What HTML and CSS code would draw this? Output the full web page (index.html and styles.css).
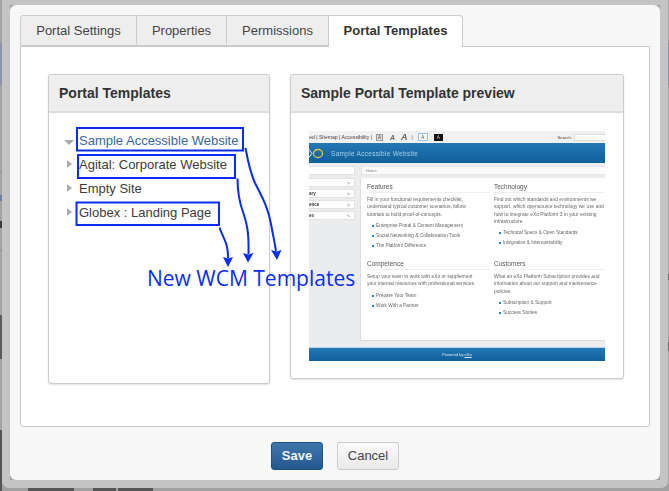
FILE: index.html
```html
<!DOCTYPE html>
<html lang="en">
<head>
<meta charset="utf-8">
<title>Portal Templates</title>
<link rel="stylesheet" href="styles.css">
</head>
<body>
<div class="edge-left"></div>
<div class="edge-right"></div>
<div class="edge-bottom"><i class="b1"></i><i class="b2"></i><i class="b3"></i></div>
<div class="frame">
  <div class="modal">
    <div class="tabs">
      <div class="tab t1">Portal Settings</div>
      <div class="tab t2">Properties</div>
      <div class="tab t3">Permissions</div>
      <div class="tab active">Portal Templates</div>
    </div>
    <div class="panel">
      <section class="card left">
        <h2 class="card-head">Portal Templates</h2>
        <ul class="tree">
          <li class="row sel"><span class="tri down"></span>Sample Accessible Website</li>
          <li class="row"><span class="tri"></span>Agital: Corporate Website</li>
          <li class="row"><span class="tri"></span>Empty Site</li>
          <li class="row"><span class="tri"></span>Globex : Landing Page</li>
        </ul>
      </section>
      <section class="card right">
        <h2 class="card-head">Sample Portal Template preview</h2>
        <div class="preview-wrap">
          <div class="preview">
            <div class="p-top">
              <span class="p-links">ed | Sitemap | Accessibility |</span>
              <span class="p-a box">A</span>
              <span class="p-a big1">A</span>
              <span class="p-a big2">A</span>
              <span class="p-sep">|</span>
              <span class="p-a wbox">A</span>
              <span class="p-a bbox">A</span>
              <span class="p-search">Search:</span>
              <span class="p-input"></span>
            </div>
            <div class="p-head">
              <svg class="p-logo" width="15" height="11" viewBox="0 0 15 11" aria-hidden="true">
                <path d="M0 1.500L3 5.500L0 9.500" fill="none" stroke="#dfe9ef" stroke-width="1"/>
                <ellipse cx="9" cy="5.500" rx="4.500" ry="4" fill="none" stroke="#e3c83a" stroke-width="1.300"/>
              </svg>
              <span class="p-title">Sample Accessible Website</span>
            </div>
            <div class="p-mid">
              <div class="p-side">
                <div class="p-item blank"></div>
                <div class="p-item"><b></b><span>&gt;</span></div>
                <div class="p-item"><b>ary</b><span>&gt;</span></div>
                <div class="p-item"><b>ence</b><span>&gt;</span></div>
                <div class="p-item"><b>es</b><span>&gt;</span></div>
              </div>
              <div class="p-content">
                <div class="p-crumb">Home</div>
                <div class="p-main">
                  <div class="p-col">
                    <h3>Features</h3>
                    <p>Fill in your functional requirements checklist, understand typical customer scenarios, follow tutorials to build proof-of-concepts.</p>
                    <ul><li>Enterprise Portal &amp; Content Management</li><li>Social Networking &amp; Collaboration Tools</li><li>The Platform Difference</li></ul>
                  </div>
                  <div class="p-col">
                    <h3>Technology</h3>
                    <p>Find out which standards and environments we support, which opensource technology we use and how to integrate eXo Platform 3 in your existing infrastructure.</p>
                    <ul><li>Technical Specs &amp; Open Standards</li><li>Integration &amp; Interoperability</li></ul>
                  </div>
                  <div class="p-col">
                    <h3>Competence</h3>
                    <p>Setup your team to work with eXo or supplement your internal resources with professional services.</p>
                    <ul><li>Prepare Your Team</li><li>Work With a Partner</li></ul>
                  </div>
                  <div class="p-col">
                    <h3>Customers</h3>
                    <p>What an eXo Platform Subscription provides and information about our support and maintenance policies.</p>
                    <ul><li>Subscription &amp; Support</li><li>Success Stories</li></ul>
                  </div>
                </div>
              </div>
            </div>
            <div class="p-foot">Powered by <u>eXo</u></div>
          </div>
        </div>
      </section>
    </div>
    <div class="actions">
      <button class="btn primary" type="button">Save</button>
      <button class="btn" type="button">Cancel</button>
    </div>
  </div>
</div>
<svg class="marks" width="669" height="491" viewBox="0 0 669 491" aria-hidden="true">
  <g fill="none" stroke="#0a2cf5" stroke-width="2">
    <rect x="77" y="128" width="166" height="22.5"/>
    <rect x="78" y="155" width="157" height="23"/>
    <rect x="76.5" y="202.5" width="142.5" height="22.5"/>
    <path d="M245.500 148C248 162 251 174 255 183C262 197 268 207 271 224C273 235 275 244 276 251"/>
    <path d="M237.500 178.500C237.500 193 239 201 243 212C247 224 249 232 248.500 254"/>
    <path d="M219.500 227.500C222 235 226 241 227 247C228 251 228 254 228 258"/>
  </g>
  <g fill="#0a2cf5">
    <path d="M271 250L276.500 251.500L281.500 250L277 260Z"/>
    <path d="M243 253L248.500 254.500L253.500 253L248 262.500Z"/>
    <path d="M223 257L228 258.500L233 257L228 267Z"/>
  </g>
</svg>
<div class="note">New WCM Templates</div>
</body>
</html>
```
FILE: styles.css
```css
* { box-sizing: border-box; }
html, body { margin: 0; padding: 0; }
body {
  width: 669px;
  height: 491px;
  overflow: hidden;
  position: relative;
  background: #a0a0a0;
  font-family: "Liberation Sans", Arial, sans-serif;
  color: #333;
}
.edge-left {
  position: absolute;
  left: 0;
  top: 0;
  width: 2px;
  height: 491px;
  background: linear-gradient(#a3a3a3 0 43px, #8a94aa 43px 85px, #a3a3a3 85px 171px, #8c8c8c 171px 172px, #a3a3a3 172px 195px, #6e7f9f 195px 201px, #a3a3a3 201px 221px, #3a3a3a 221px 228px, #a3a3a3 228px 250px, #8c8c8c 250px 251px, #a3a3a3 251px 315px, #5a5a5a 315px 359px, #a3a3a3 359px 430px, #555 430px 491px);
}
.edge-right {
  position: absolute;
  right: 0;
  top: 0;
  width: 1px;
  height: 491px;
  background: linear-gradient(#a3a3a3 0 43px, #8a94aa 43px 85px, #a3a3a3 85px 274px, #666 274px 280px, #a3a3a3 280px 342px, #6a6a6a 342px 351px, #a3a3a3 351px 491px);
}
.edge-bottom {
  position: absolute;
  left: 0;
  bottom: 0;
  width: 669px;
  height: 3px;
}
.edge-bottom i { position: absolute; top: 0; height: 3px; background: #555; }
.edge-bottom .b1 { left: 28px; width: 46px; }
.edge-bottom .b2 { left: 93px; width: 23px; }
.edge-bottom .b3 { left: 118px; width: 35px; }
.frame {
  position: relative;
  width: 666px;
  height: 488px;
  margin-left: 2px;
  border: 8px solid #c4c4c4;
  border-top-width: 5px;
  border-radius: 0 0 7px 7px;
}
.modal {
  height: 475px;
  padding: 10px;
  background: #f7f7f7;
  border-radius: 6px;
}
.tabs { display: flex; height: 32px; position: relative; z-index: 1; }
.tab {
  height: 31px;
  padding-top: 7px;
  font-size: 13px;
  line-height: 16px;
  text-align: center;
  background: #eee;
  border: 1px solid #ccc;
  border-left: 0;
  color: #444;
}
.t1 { width: 117px; border-left: 1px solid #ccc; border-radius: 3px 0 0 0; }
.t2 { width: 90px; }
.t3 { width: 101px; border-right: 0; }
.tab.active {
  width: 135px;
  height: 32px;
  font-weight: 700;
  background: #fff;
  border-left: 1px solid #ccc;
  border-bottom: 0;
  border-radius: 0 4px 0 0;
  color: #333;
}
.panel {
  display: flex;
  align-items: flex-start;
  gap: 20px;
  height: 381px;
  margin-top: -1px;
  padding: 27px 0 0 27px;
  background: #fff;
  border: 1px solid #c8c8c8;
  border-radius: 0 0 3px 3px;
}
.card {
  flex: none;
  background: #fff;
  border: 1px solid #ccc;
  border-radius: 3px;
  box-shadow: 0 1px 2px rgba(0,0,0,.12);
}
.card.left { width: 222px; height: 310px; }
.card.right { width: 334px; height: 305px; }
.card-head {
  margin: 0;
  height: 38px;
  padding: 0 10px;
  font-size: 14px;
  line-height: 36px;
  font-weight: 700;
  color: #333;
  background: #eee;
  border-bottom: 2px solid #ddd;
  border-radius: 3px 3px 0 0;
}
.tree { list-style: none; margin: 0; padding: 16px 0 0 30px; }
.row {
  position: relative;
  height: 24px;
  font-size: 13px;
  line-height: 24px;
  color: #3c3c3c;
  white-space: nowrap;
}
.row.sel { color: #3a659c; }
.tri {
  position: absolute;
  left: -12px;
  top: 7px;
  border-left: 5px solid #aaa;
  border-top: 4px solid transparent;
  border-bottom: 4px solid transparent;
}
.tri.down {
  left: -15px;
  top: 11px;
  border-top: 5px solid #aaa;
  border-left: 5px solid transparent;
  border-right: 5px solid transparent;
  border-bottom: 0;
}
.preview-wrap { padding: 18px; }
.preview {
  width: 296px;
  height: 230px;
  overflow: hidden;
  display: flex;
  flex-direction: column;
  background: #ebecee;
  filter: blur(.45px);
  color: #444;
}
.p-top {
  display: flex;
  align-items: center;
  height: 12px;
  background: #f1f1f2;
  font-size: 5.100px;
  white-space: nowrap;
  color: #444;
}
.p-links { display: flex; justify-content: flex-end; width: 63px; }
.p-a { text-align: center; flex: none; }
.p-a.box { width: 7px; height: 7px; line-height: 6px; margin-left: 4px; border: 1px solid #999; background: #ddd; font-size: 4.500px; }
.p-a.big1 { margin-left: 7px; font-size: 7px; font-style: italic; font-weight: 700; color: #666; }
.p-a.big2 { margin-left: 6px; font-size: 9px; font-style: italic; font-weight: 700; color: #666; }
.p-sep { margin-left: 4px; font-size: 4.500px; }
.p-a.wbox { width: 10px; height: 8px; line-height: 7px; margin-left: 5px; background: #fff; border: 1px solid #9cc3e4; font-size: 4.500px; }
.p-a.bbox { width: 9px; height: 7px; line-height: 7px; margin-left: 6px; background: #111; color: #ddd; font-size: 4.500px; }
.p-search { margin-left: auto; font-size: 4.200px; }
.p-input { width: 31px; height: 7px; margin-left: 2px; background: #fff; border: 1px solid #ddd; border-right: 0; }
.p-head {
  display: flex;
  align-items: center;
  height: 20px;
  background: linear-gradient(#2378b5, #105f99);
  color: #a9d0ea;
}
.p-logo { flex: none; }
.p-title { margin-left: 7px; font-size: 6.500px; letter-spacing: .3px; white-space: nowrap; }
.p-mid { display: flex; height: 184px; padding-top: 3px; }
.p-side { width: 46px; display: flex; flex-direction: column; gap: 2px; }
.p-item {
  display: flex;
  justify-content: space-between;
  align-items: center;
  height: 9px;
  padding-right: 4px;
  background: #fff;
  border: 1px solid #e2e2e2;
  border-left: 0;
  font-size: 4.500px;
  color: #333;
}
.p-item span { color: #777; font-size: 5px; }
.p-item.blank { margin-bottom: 1px; }
.p-content { width: 245px; margin-left: 5px; }
.p-crumb {
  height: 9px;
  margin-left: 1px;
  padding-left: 4px;
  font-size: 4px;
  line-height: 8px;
  color: #888;
  background: #fafafa;
  border: 1px solid #e6e6e6;
  border-right: 0;
}
.p-main {
  display: grid;
  grid-template-columns: 127px 118px;
  grid-template-rows: 84px 79px;
  height: 163px;
  margin-top: 3px;
  padding-left: 6px;
  background: #fff;
  border-left: 1px solid #ddd;
  border-bottom: 1px solid #ddd;
}
.p-col { padding: 6px 4px 0 0; overflow: hidden; }
.p-col:nth-child(n+3) { padding-top: 0; margin-top: -1px; }
.p-col h3 {
  margin: 0 0 3px;
  height: 9px;
  font-size: 6.500px;
  line-height: 6px;
  font-weight: 400;
  color: #555;
  border-bottom: 1px solid #eee;
  white-space: nowrap;
}
.p-col p { margin: 0; width: 112px; font-size: 4.900px; line-height: 7.300px; color: #666; }
.p-col ul { list-style: none; margin: 4px 0 0; padding: 0 0 0 9px; }
.p-col li { position: relative; height: 10px; font-size: 4.750px; line-height: 8px; color: #666; white-space: nowrap; }
.p-col li::before {
  content: "";
  position: absolute;
  left: -4px;
  top: 3px;
  width: 2px;
  height: 2px;
  background: #2a87c8;
}
.p-foot {
  height: 14px;
  text-align: center;
  font-size: 4px;
  line-height: 14px;
  color: #dce9f3;
  background: linear-gradient(#2378b5, #105f99);
  border-top: 1px solid #bcd3e3;
}
.actions {
  display: flex;
  justify-content: center;
  gap: 14px;
  margin-top: 15px;
}
.btn {
  width: 62px;
  height: 28px;
  padding: 0;
  font: 13px/26px "Liberation Sans", Arial, sans-serif;
  color: #444;
  background: linear-gradient(#fbfbfb, #e9e9e9);
  border: 1px solid #ccc;
  border-radius: 3px;
}
.btn.primary {
  width: 52px;
  font-weight: 700;
  color: #eef3f8;
  background: linear-gradient(#4177ae, #24578d);
  border-color: #20507f;
}
.marks { position: absolute; left: 0; top: 0; pointer-events: none; }
.note {
  position: absolute;
  left: 147px;
  top: 263px;
  font-family: "Open Sans", sans-serif;
  font-size: 21px;
  line-height: 30px;
  color: #0a2cf5;
  white-space: nowrap;
}
```
